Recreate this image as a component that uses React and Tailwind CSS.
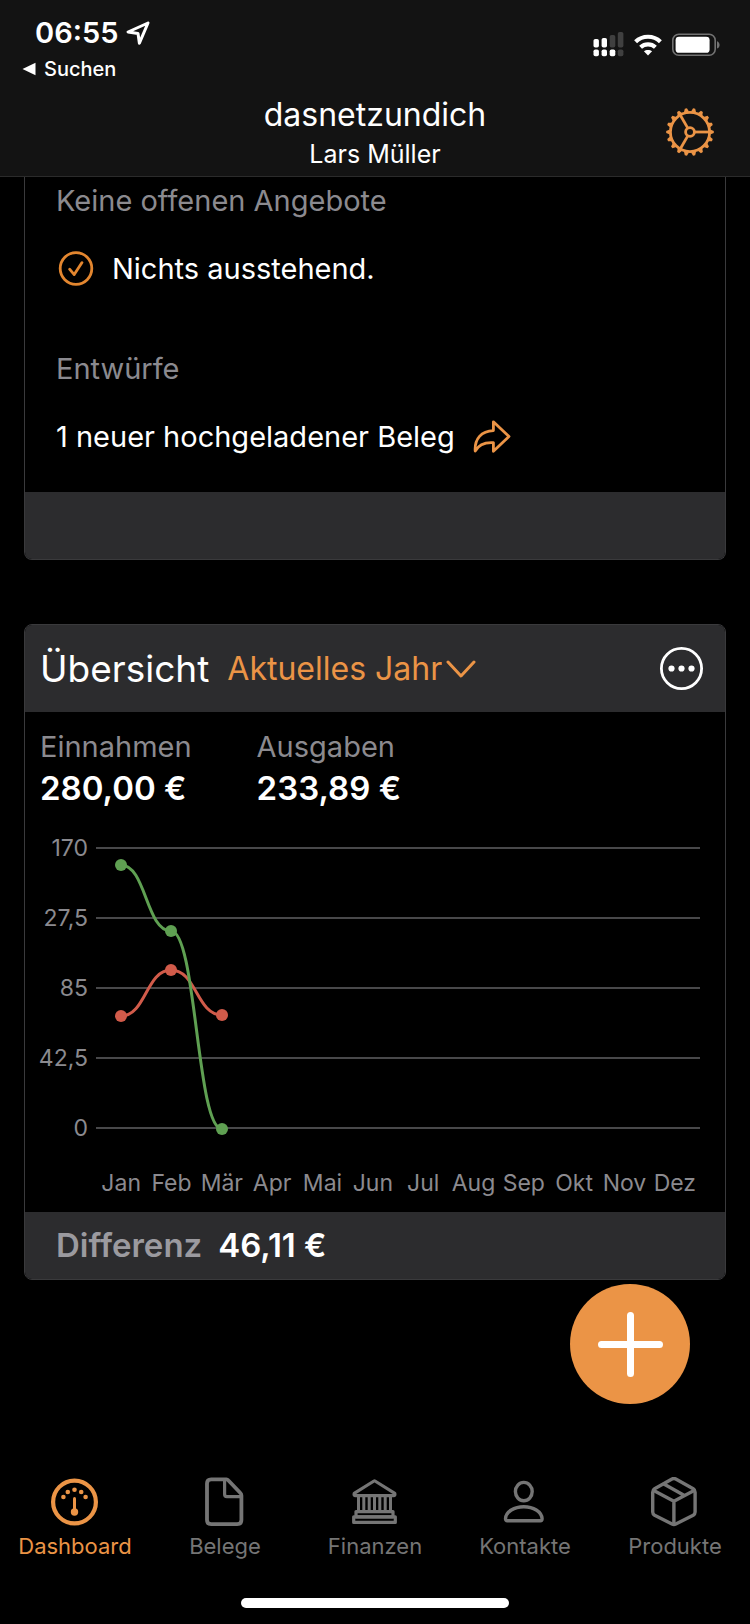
import { useState } from "react"

const MONTHS = ["Jan", "Feb", "Mär", "Apr", "Mai", "Jun", "Jul", "Aug", "Sep", "Okt", "Nov", "Dez"]
const Y_LABELS = ["170", "27,5", "85", "42,5", "0"]

// Chart points, in the units of the chart's viewBox
const SERIES = [
  { name: "Ausgaben", color: "#d15b4a", points: [[25, 180], [75, 134], [126, 179]] },
  { name: "Einnahmen", color: "#5fa052", points: [[25, 29], [75, 95], [126, 293]] },
]

const curve = (points) =>
  points.reduce((d, [x, y], i) => {
    if (i === 0) return `M${x} ${y}`
    const [px, py] = points[i - 1]
    const mid = (px + x) / 2
    return `${d} C${mid} ${py} ${mid} ${y} ${x} ${y}`
  }, "")

const GearIcon = () => (
  <svg viewBox="-24 -24 48 48" className="w-12 h-12" fill="none" stroke="currentColor" strokeWidth="2.8">
    <circle r="19.6" />
    <circle r="4.4" />
    {[0, 120, 240].map((a) => (
      <path key={a} d="M5 0H19" transform={`rotate(${a})`} />
    ))}
    {Array.from({ length: 18 }, (_, i) => (
      <path
        key={i}
        d="M20.2 -2.6L23.8 -1.1V1.1L20.2 2.6Z"
        fill="currentColor"
        stroke="none"
        transform={`rotate(${i * 20})`}
      />
    ))}
  </svg>
)

const StatusIcons = () => (
  <div className="flex items-center gap-[10px] mt-8">
    <svg viewBox="0 0 31 25" className="w-[31px] h-[25px]" fill="#fff">
      <rect x="0.5" y="7" width="5.4" height="8.5" rx="1.8" />
      <rect x="8.6" y="6" width="5.4" height="9.5" rx="1.8" />
      <rect x="16.7" y="3" width="5.6" height="12.5" rx="1.8" fill="#404040" />
      <rect x="24.8" y="0" width="5.6" height="15.5" rx="1.8" fill="#404040" />
      <rect x="0.5" y="17.4" width="5.4" height="6.8" rx="1.8" />
      <rect x="8.6" y="17.4" width="5.4" height="6.8" rx="1.8" />
      <rect x="16.7" y="17.4" width="5.6" height="6.8" rx="1.8" />
      <rect x="24.8" y="17.4" width="5.6" height="6.8" rx="1.8" fill="#404040" />
    </svg>
    <svg viewBox="0 0 28 22" className="w-7 h-[22px]" fill="none" stroke="#fff" strokeWidth="4.2">
      <path d="M1.6 7.7C8.5 1.1 19.5 1.1 26.4 7.7" />
      <path d="M6.6 13.2C10.8 9.4 17.2 9.4 21.4 13.2" />
      <path d="M14 21.4L9.9 17.3C12.2 15.4 15.8 15.4 18.1 17.3Z" fill="#fff" stroke="none" />
    </svg>
    <svg viewBox="0 0 48 24" className="w-12 h-6">
      <rect x="0.8" y="1.2" width="42.4" height="21" rx="6" fill="none" stroke="#727272" strokeWidth="1.6" />
      <rect x="3.6" y="3.8" width="34" height="16" rx="3.4" fill="#fff" />
      <path d="M45 8.2C48.4 9.4 48.4 14.4 45 15.6Z" fill="#727272" />
    </svg>
  </div>
)

const DashboardIcon = () => (
  <svg viewBox="0 0 50 50" className="w-[50px] h-[50px]" fill="none" stroke="currentColor">
    <circle cx="24.5" cy="25" r="21.4" strokeWidth="4.2" />
    <path d="M24.5 21.5V34" strokeWidth="3" strokeLinecap="round" />
    <g fill="currentColor" stroke="none">
      <circle cx="24.5" cy="35" r="3.7" />
      <circle cx="13.4" cy="20" r="2.3" />
      <circle cx="17.8" cy="15" r="2.3" />
      <circle cx="24.5" cy="12.7" r="2.3" />
      <circle cx="31.2" cy="15" r="2.3" />
      <circle cx="35.6" cy="20" r="2.3" />
    </g>
  </svg>
)

const FileIcon = () => (
  <svg viewBox="0 0 50 50" className="w-[50px] h-[50px]" fill="none" stroke="currentColor" strokeWidth="3.8" strokeLinejoin="round">
    <path d="M26.5 2.3H11.2Q7 2.3 7 6.5V43Q7 47.2 11.2 47.2H37.2Q41.4 47.2 41.4 43V18.5Q41.4 17 40.4 16L28.2 3.2Q27.4 2.3 26.5 2.3Z" />
    <path d="M24.6 2.6V17.3Q24.6 19.6 26.9 19.6H41.2" strokeWidth="3.2" />
  </svg>
)

const BankIcon = () => (
  <svg viewBox="0 0 50 50" className="w-[50px] h-[50px]" fill="none" stroke="currentColor" strokeWidth="3.2" strokeLinejoin="round">
    <path d="M4.2 16.4L24 4Q24.5 3.7 25 4L44.8 16.4Q45.4 18.6 43.4 18.6H5.6Q3.6 18.6 4.2 16.4Z" />
    <path d="M8.5 19V34M13.8 19V34M19.2 19V34M24.5 19V34M29.8 19V34M35.2 19V34M40.5 19V34" strokeWidth="3" />
    <path d="M6 34.6H43V39.8H6Z" />
    <path d="M3.7 39.8H45.3V45.4H3.7Z" />
  </svg>
)

const PersonIcon = () => (
  <svg viewBox="0 0 50 50" className="w-[50px] h-[50px]" fill="none" stroke="currentColor" strokeWidth="3.4" strokeLinejoin="round">
    <ellipse cx="23.8" cy="14.6" rx="8.4" ry="9.2" />
    <path d="M7.3 43.8Q5.5 43.8 5.5 41.6C6.1 34.4 14.3 29.7 23.8 29.7S41.5 34.4 42.1 41.6Q42.1 43.8 40.3 43.8Z" />
  </svg>
)

const BoxIcon = () => (
  <svg viewBox="0 0 50 50" className="w-[50px] h-[50px]" fill="none" stroke="currentColor" strokeWidth="3.4" strokeLinejoin="round">
    <path d="M22 2Q23.9 1 25.8 2L43.2 11.8Q45.1 13 45.1 15.2V35Q45.1 37 43.2 38.2L25.8 47Q23.9 48 22 47L4.6 38.2Q2.7 37 2.7 35V15.2Q2.7 13 4.6 11.8Z" />
    <path d="M3.7 13.4L23.9 24.2L44.1 13.4M23.9 24.2V47.5M13.4 6.8L34.4 18.6" />
  </svg>
)

const TABS = [
  { label: "Dashboard", icon: DashboardIcon },
  { label: "Belege", icon: FileIcon },
  { label: "Finanzen", icon: BankIcon },
  { label: "Kontakte", icon: PersonIcon },
  { label: "Produkte", icon: BoxIcon },
]

const Header = () => (
  <header className="bg-[#131313] border-b border-[#2b2b2b] pb-[3px]">
    <div className="h-[95px] flex justify-between items-start pl-[22px] pr-[30px]">
      <div className="pt-[15px]">
        <div className="flex items-center gap-2 pl-[13px] leading-9">
          <span className="text-[29px] font-semibold">06:55</span>
          <svg viewBox="0 0 24 24" className="w-6 h-6" fill="none" stroke="#fff" strokeWidth="3" strokeLinejoin="round">
            <path d="M22 2L2 11L12 12.4L13.4 22.2Z" />
          </svg>
        </div>
        <a href="#suchen" className="flex items-center gap-2 text-[20px] font-medium leading-9">
          <svg viewBox="0 0 14 14" className="w-[14px] h-[14px]" fill="#fff">
            <path d="M0.5 7L13.5 0.8V13.2Z" />
          </svg>
          Suchen
        </a>
      </div>
      <StatusIcons />
    </div>
    <div className="grid grid-cols-[1fr_auto_1fr] items-center px-9">
      <div className="col-start-2 text-center">
        <h1 className="text-[32px] leading-10">dasnetzundich</h1>
        <p className="text-[25px] leading-[38px]">Lars Müller</p>
      </div>
      <button type="button" aria-label="Einstellungen" className="justify-self-end mb-1 text-[#eb9446]">
        <GearIcon />
      </button>
    </div>
  </header>
)

const OpenItemsCard = () => (
  <section className="border border-t-0 border-[#3a3a3c] rounded-b-lg overflow-hidden">
    <div className="px-[31px] pb-[31px] text-[29px]">
      <h2 className="h-12 leading-[48px] text-[#8b8a8f]">Keine offenen Angebote</h2>
      <p className="mt-5 h-12 flex items-center gap-[17px]">
        <svg viewBox="0 0 39 38" className="w-[39px] h-[38px]" fill="none" stroke="#e3862f" strokeWidth="2.8" strokeLinecap="round" strokeLinejoin="round">
          <circle cx="20" cy="18.5" r="15.8" />
          <path d="M13.6 19.2L18.2 24.6L26 12.6" />
        </svg>
        Nichts ausstehend.
      </p>
      <h2 className="mt-[52px] h-12 leading-[48px] text-[#8b8a8f]">Entwürfe</h2>
      <a href="#belege" className="mt-5 h-12 flex items-center gap-[18px]">
        1 neuer hochgeladener Beleg
        <svg viewBox="0 0 38 34" className="w-[38px] h-[34px]" fill="none" stroke="#eb9446" strokeWidth="2.8" strokeLinejoin="round">
          <path d="M20.4 1.8L36 16.4L20.4 31.2V22.6C11 22 5.4 25 2.2 31C1.4 19 8.4 10.8 20.4 10.6Z" />
        </svg>
      </a>
    </div>
    <div className="h-[67px] bg-[#2c2c2e]" />
  </section>
)

const Chart = () => (
  <div className="pl-[15px] pr-[25px] mt-[27px] pb-[13px] text-[#8b8a8f] text-[23px]">
    <div className="flex gap-2">
      <div className="w-12 flex flex-col justify-between items-end leading-6">
        {Y_LABELS.map((label) => (
          <span key={label}>{label}</span>
        ))}
      </div>
      <svg viewBox="0 0 604 304" className="flex-1 min-w-0" fill="none" role="img" aria-label="Einnahmen und Ausgaben">
        {Y_LABELS.map((label, i) => (
          <path key={label} d={`M0 ${12 + i * 70}H604`} stroke="#48484a" strokeWidth="2" />
        ))}
        {SERIES.map(({ name, color, points }) => (
          <g key={name}>
            <path d={curve(points)} stroke={color} strokeWidth="3" />
            {points.map(([x, y]) => (
              <circle key={x} cx={x} cy={y} r="6" fill={color} />
            ))}
          </g>
        ))}
      </svg>
    </div>
    <div className="grid grid-cols-12 ml-14 mt-[27px] leading-8">
      {MONTHS.map((month) => (
        <span key={month} className="flex justify-center">{month}</span>
      ))}
    </div>
  </div>
)

const OverviewCard = () => {
  const [range, setRange] = useState("Aktuelles Jahr")

  return (
    <section className="mt-16 border border-[#3a3a3c] rounded-lg overflow-hidden">
      <div className="h-[87px] bg-[#2c2c2e] flex items-center pl-[15px] pr-[21px]">
        <h2 className="text-[37px]">Übersicht</h2>
        <label className="ml-[18px] flex items-center gap-1 text-[#eb9446]">
          <select
            aria-label="Zeitraum"
            value={range}
            onChange={(e) => setRange(e.target.value)}
            className="appearance-none bg-transparent text-[32px] [field-sizing:content]"
          >
            <option>Aktuelles Jahr</option>
            <option>Letztes Jahr</option>
          </select>
          <svg viewBox="0 0 30 20" className="w-[30px] h-5" fill="none" stroke="currentColor" strokeWidth="3" strokeLinecap="round" strokeLinejoin="round">
            <path d="M2 3L15 17L28 3" />
          </svg>
        </label>
        <button type="button" aria-label="Mehr" className="ml-auto">
          <svg viewBox="0 0 44 44" className="w-11 h-11" fill="#fff">
            <circle cx="21.5" cy="21.5" r="20.1" fill="none" stroke="#fff" strokeWidth="2.8" />
            <circle cx="11.5" cy="21.5" r="3.1" />
            <circle cx="21.5" cy="21.5" r="3.1" />
            <circle cx="31.5" cy="21.5" r="3.1" />
          </svg>
        </button>
      </div>

      <dl className="flex gap-[65px] pl-[15px] pt-[15px]">
        <div>
          <dt className="text-[29px] leading-10 text-[#8b8a8f]">Einnahmen</dt>
          <dd className="text-[33px] leading-[42px] font-semibold">280,00 €</dd>
        </div>
        <div>
          <dt className="text-[29px] leading-10 text-[#8b8a8f]">Ausgaben</dt>
          <dd className="text-[33px] leading-[42px] font-semibold">233,89 €</dd>
        </div>
      </dl>

      <Chart />

      <div className="h-[67px] bg-[#2c2c2e] flex items-center gap-4 px-[31px] text-[33px] font-semibold">
        <span className="text-[#9b9a9f]">Differenz</span>
        <span>46,11 €</span>
      </div>
    </section>
  )
}

const TabBar = ({ active, onChange }) => (
  <nav className="pb-4">
    <div className="grid grid-cols-5">
      {TABS.map(({ label, icon: Icon }) => (
        <button
          key={label}
          type="button"
          onClick={() => onChange(label)}
          className={`flex flex-col items-center gap-[3px] text-[22px] leading-8 ${active === label ? "text-[#eb9446]" : "text-[#757575]"}`}
        >
          <Icon />
          {label}
        </button>
      ))}
    </div>
    <div className="mt-9 mx-auto w-[268px] h-[10px] rounded-full bg-white" />
  </nav>
)

const App = () => {
  const [tab, setTab] = useState("Dashboard")

  return (
    <div className="min-h-screen flex flex-col bg-black text-white font-['Inter',sans-serif]">
      <Header />
      <main className="flex-1 px-6">
        <OpenItemsCard />
        <OverviewCard />
      </main>
      <TabBar active={tab} onChange={setTab} />

      {/* Floating add button */}
      <button
        type="button"
        aria-label="Neu"
        className="fixed right-[60px] bottom-[220px] w-[120px] h-[120px] rounded-full bg-[#eb9446] flex items-center justify-center"
      >
        <svg viewBox="0 0 66 66" className="w-[66px] h-[66px]" stroke="#fff" strokeWidth="7" strokeLinecap="round">
          <path d="M33.5 4.5V62.5M4.5 33.5H62.5" />
        </svg>
      </button>
    </div>
  )
}

export default App
